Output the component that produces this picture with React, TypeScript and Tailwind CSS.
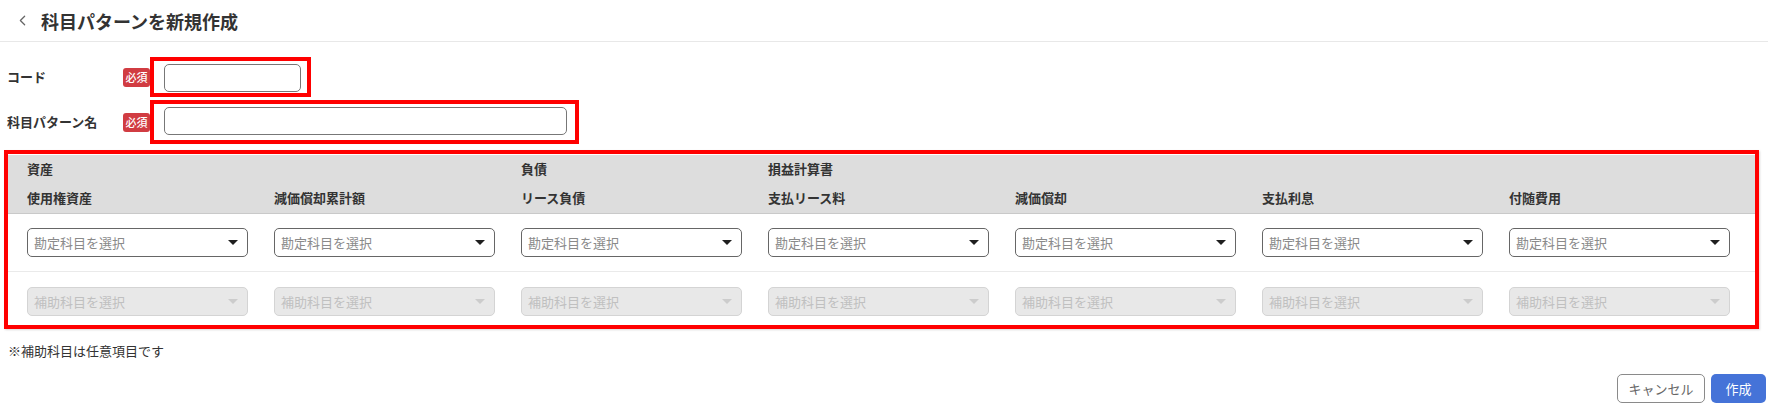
import React from "react";
import { ChevronLeft } from "lucide-react";

const groups = ["資産", "", "負債", "損益計算書", "", "", ""];
const columns = [
  "使用権資産",
  "減価償却累計額",
  "リース負債",
  "支払リース料",
  "減価償却",
  "支払利息",
  "付随費用",
];

const gridCols = "grid grid-cols-[repeat(7,221px)] gap-x-[26px] pl-[19px]";

const Caret = ({ disabled }: { disabled?: boolean }) => (
  <svg width="10" height="5" viewBox="0 0 10 5">
    <path d="M0 0h10L5 5z" fill={disabled ? "#cccccc" : "#1f1f1f"} />
  </svg>
);

const SelectBox = ({
  placeholder,
  disabled,
}: {
  placeholder: string;
  disabled?: boolean;
}) => (
  <div
    className={
      disabled
        ? "flex h-[29px] items-center justify-between rounded-[5px] border border-[#d4d4d4] bg-[#e8e8e8] pl-[6px] pr-[9px] text-[13px] text-[#c0c0c0]"
        : "flex h-[29px] items-center justify-between rounded-[5px] border border-[#666666] bg-white pl-[6px] pr-[9px] text-[13px] text-[#8a8a8a]"
    }
  >
    <span>{placeholder}</span>
    <Caret disabled={disabled} />
  </div>
);

const Required = () => (
  <span className="flex h-[19px] w-[27px] items-center justify-center rounded-[3px] bg-[#d13c42] text-[11px] font-medium text-white">
    必須
  </span>
);

export default function App() {
  return (
    <div className="h-[414px] w-[1768px] bg-white font-['Noto_Sans_CJK_JP',sans-serif] text-[#333333]">
      {/* header */}
      <div className="flex h-[42px] items-center gap-[10px] border-b border-[#e8e8e8] pl-[14px]">
        <ChevronLeft size={17} strokeWidth={1.8} className="text-[#666666]" />
        <h1 className="text-[18px] font-bold leading-none">科目パターンを新規作成</h1>
      </div>

      {/* code */}
      <div className="mt-[15px] flex h-[40px] items-center">
        <div className="w-[123px] pl-[7px] text-[13px] font-bold">コード</div>
        <Required />
        <div className="h-[40px] w-[161px] border-4 border-[#ff0000] pl-[10px] pt-[3px]">
          <div className="h-[28px] w-[137px] rounded-[5px] border border-[#777777]" />
        </div>
      </div>

      {/* name */}
      <div className="mt-[3px] flex h-[44px] items-center">
        <div className="w-[123px] pl-[7px] text-[13px] font-bold">科目パターン名</div>
        <Required />
        <div className="h-[44px] w-[429px] border-4 border-[#ff0000] pl-[10px] pt-[3px]">
          <div className="h-[28px] w-[403px] rounded-[5px] border border-[#777777]" />
        </div>
      </div>

      {/* table */}
      <div className="ml-[4px] mt-[6px] w-[1755px] border-4 border-[#ff0000] shadow-[1px_1px_2px_rgba(0,0,0,0.15)]">
        <div className="mt-[1px] border-b border-[#c9c9c9] bg-[#dddddd] text-[13px] font-bold">
          <div className={`${gridCols} h-[27px] items-center pt-[1px]`}>
            {groups.map((g, i) => (
              <div key={i}>{g}</div>
            ))}
          </div>
          <div className={`${gridCols} h-[31px] items-center`}>
            {columns.map((c) => (
              <div key={c}>{c}</div>
            ))}
          </div>
        </div>
        <div className={`${gridCols} h-[58px] items-center border-b border-[#eaeaea]`}>
          {columns.map((c) => (
            <SelectBox key={c} placeholder="勘定科目を選択" />
          ))}
        </div>
        <div className={`${gridCols} h-[53px] pt-[15px]`}>
          {columns.map((c) => (
            <SelectBox key={c} placeholder="補助科目を選択" disabled />
          ))}
        </div>
      </div>

      <p className="mt-[13px] h-[18px] pl-[8px] text-[13px] leading-[18px]">※補助科目は任意項目です</p>

      <div className="mt-[14px] flex justify-end gap-[6px] pr-[2px]">
        <button className="h-[29px] w-[88px] rounded-[5px] border border-[#8a8a8a] bg-white text-[13px] text-[#666666]">
          キャンセル
        </button>
        <button className="h-[29px] w-[55px] rounded-[5px] bg-[#4573d8] text-[13px] text-white">
          作成
        </button>
      </div>
    </div>
  );
}
